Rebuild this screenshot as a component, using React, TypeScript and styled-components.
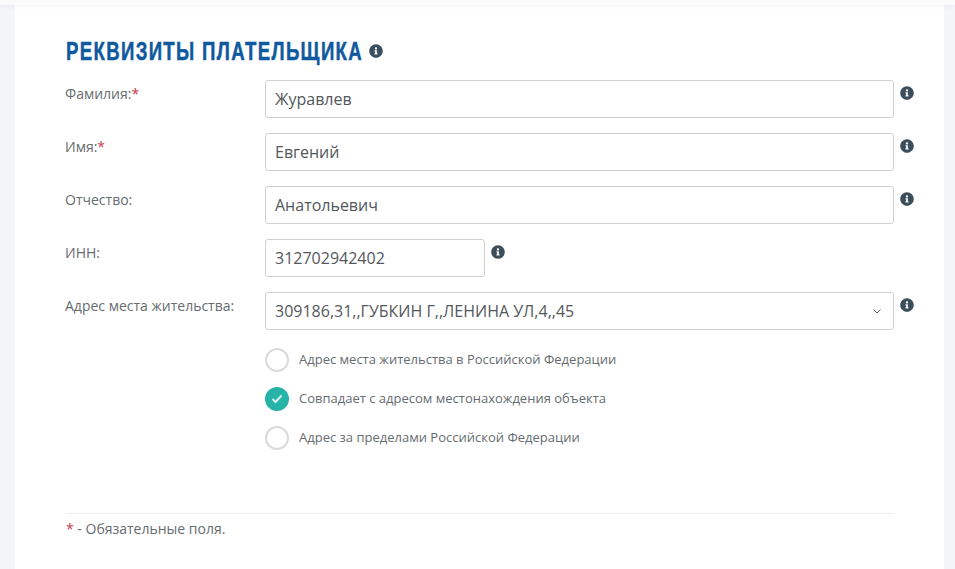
import React from 'react'
import styled, { createGlobalStyle } from 'styled-components'
import { FaInfoCircle } from 'react-icons/fa'

const GlobalStyle = createGlobalStyle`
  html, body {
    margin: 0;
    padding: 0;
    height: 100%;
    overflow: hidden;
    background: #f3f5f8;
    font-family: "Open Sans", "Liberation Sans", sans-serif;
  }
`

const App = () => {
  return (
    <Page>
      <GlobalStyle />
      <TopBar />
      <Panel>
        <Title>
          <TitleBox>
            <TitleText>Реквизиты плательщика</TitleText>
          </TitleBox>
          <InfoIcon />
        </Title>

        <Row>
          <Label>Фамилия:<Star>*</Star></Label>
          <Field>Журавлев</Field>
          <InfoIcon />
        </Row>
        <Row>
          <Label>Имя:<Star>*</Star></Label>
          <Field>Евгений</Field>
          <InfoIcon />
        </Row>
        <Row>
          <Label>Отчество:</Label>
          <Field>Анатольевич</Field>
          <InfoIcon />
        </Row>
        <Row>
          <Label>ИНН:</Label>
          <Field $short>312702942402</Field>
          <InfoIcon />
        </Row>
        <Row>
          <Label>Адрес места жительства:</Label>
          <Field>
            309186,31,,ГУБКИН Г,,ЛЕНИНА УЛ,4,,45
            <Chevron viewBox="0 0 8 5">
              <path d="M0.5 0.5 L4 4 L7.5 0.5" fill="none" stroke="#555" strokeWidth="1" />
            </Chevron>
          </Field>
          <InfoIcon />
        </Row>

        <Radios>
          <RadioRow>
            <Radio />
            <RadioText>Адрес места жительства в Российской Федерации</RadioText>
          </RadioRow>
          <RadioRow>
            <Radio $checked>
              <svg width="12" height="10" viewBox="0 0 12 10">
                <path d="M1.5 5 L4.5 8 L10.5 1.5" fill="none" stroke="#d9f3f0" strokeWidth="2" />
              </svg>
            </Radio>
            <RadioText>Совпадает с адресом местонахождения объекта</RadioText>
          </RadioRow>
          <RadioRow>
            <Radio />
            <RadioText>Адрес за пределами Российской Федерации</RadioText>
          </RadioRow>
        </Radios>

        <Footer>
          <Star>*</Star> - Обязательные поля.
        </Footer>
      </Panel>
    </Page>
  )
}

export default App

const Page = styled.div`
  width: 955px;
  height: 569px;
  overflow: hidden;
  display: flex;
  flex-direction: column;
`

const TopBar = styled.div`
  height: 5px;
  flex-shrink: 0;
  background: #fbfbfb;
  box-shadow: 0 1px 5px rgba(0, 0, 0, 0.05);
  position: relative;
  z-index: 1;
`

const Panel = styled.div`
  margin: 0 11px 0 15px;
  flex: 1;
  background: #fff;
  padding: 31px 50px 0 51px;
`

const Title = styled.div`
  display: flex;
  align-items: center;
  gap: 6px;
  height: 30px;
  margin-bottom: 14px;
`

const TitleBox = styled.div`
  width: 297px;
  flex-shrink: 0;
`

// no condensed face installed, so the bold sans is squeezed to the heading's width
const TitleText = styled.h2`
  margin: 0;
  display: inline-block;
  color: #0f5a9e;
  font-family: "Liberation Sans", sans-serif;
  font-size: 25px;
  line-height: 30px;
  font-weight: 700;
  letter-spacing: 1.8px;
  text-transform: uppercase;
  white-space: nowrap;
  -webkit-text-stroke: 0.5px #0f5a9e;
  transform: scaleX(0.744);
  transform-origin: left center;
`

const InfoIcon = styled(FaInfoCircle)`
  width: 14px;
  height: 14px;
  color: #3c4d5b;
  flex-shrink: 0;
`

const Row = styled.div`
  display: flex;
  align-items: flex-start;
  margin: 0 -20px 15px 0;

  ${InfoIcon} {
    margin: 6px 0 0 6px;
  }
`

const Label = styled.div`
  width: 200px;
  margin-left: -1px;
  flex-shrink: 0;
  padding-top: 4px;
  color: #666c70;
  font-size: 14px;
  line-height: 20px;
`

const Star = styled.span`
  color: #c8384a;
`

const Field = styled.div<{ $short?: boolean }>`
  position: relative;
  box-sizing: border-box;
  width: ${p => (p.$short ? '220px' : '629px')};
  flex-shrink: 0;
  height: 38px;
  padding: 0 9px;
  display: flex;
  align-items: center;
  border: 1px solid #d0d0d0;
  border-radius: 3px;
  background: #fff;
  color: #54585b;
  font-size: 16px;
`

const Chevron = styled.svg`
  position: absolute;
  right: 12px;
  top: 16px;
  width: 8px;
  height: 5px;
`

const Radios = styled.div`
  padding-left: 199px;
  margin-top: 18px;
  display: flex;
  flex-direction: column;
  gap: 15px;
`

const RadioRow = styled.div`
  display: flex;
  align-items: center;
  gap: 10px;
  height: 24px;
`

const Radio = styled.div<{ $checked?: boolean }>`
  box-sizing: border-box;
  width: 24px;
  height: 24px;
  border-radius: 50%;
  display: flex;
  align-items: center;
  justify-content: center;
  border: 2px solid ${p => (p.$checked ? '#26b3a8' : '#dadada')};
  background: ${p => (p.$checked ? '#26b3a8' : '#fff')};
`

const RadioText = styled.span`
  color: #666c70;
  font-size: 13px;
  margin-top: -3px;
`

const Footer = styled.div`
  margin-top: 63px;
  padding-top: 5px;
  border-top: 1px solid #eeeeee;
  color: #666c70;
  font-size: 14px;
  line-height: 20px;
`
